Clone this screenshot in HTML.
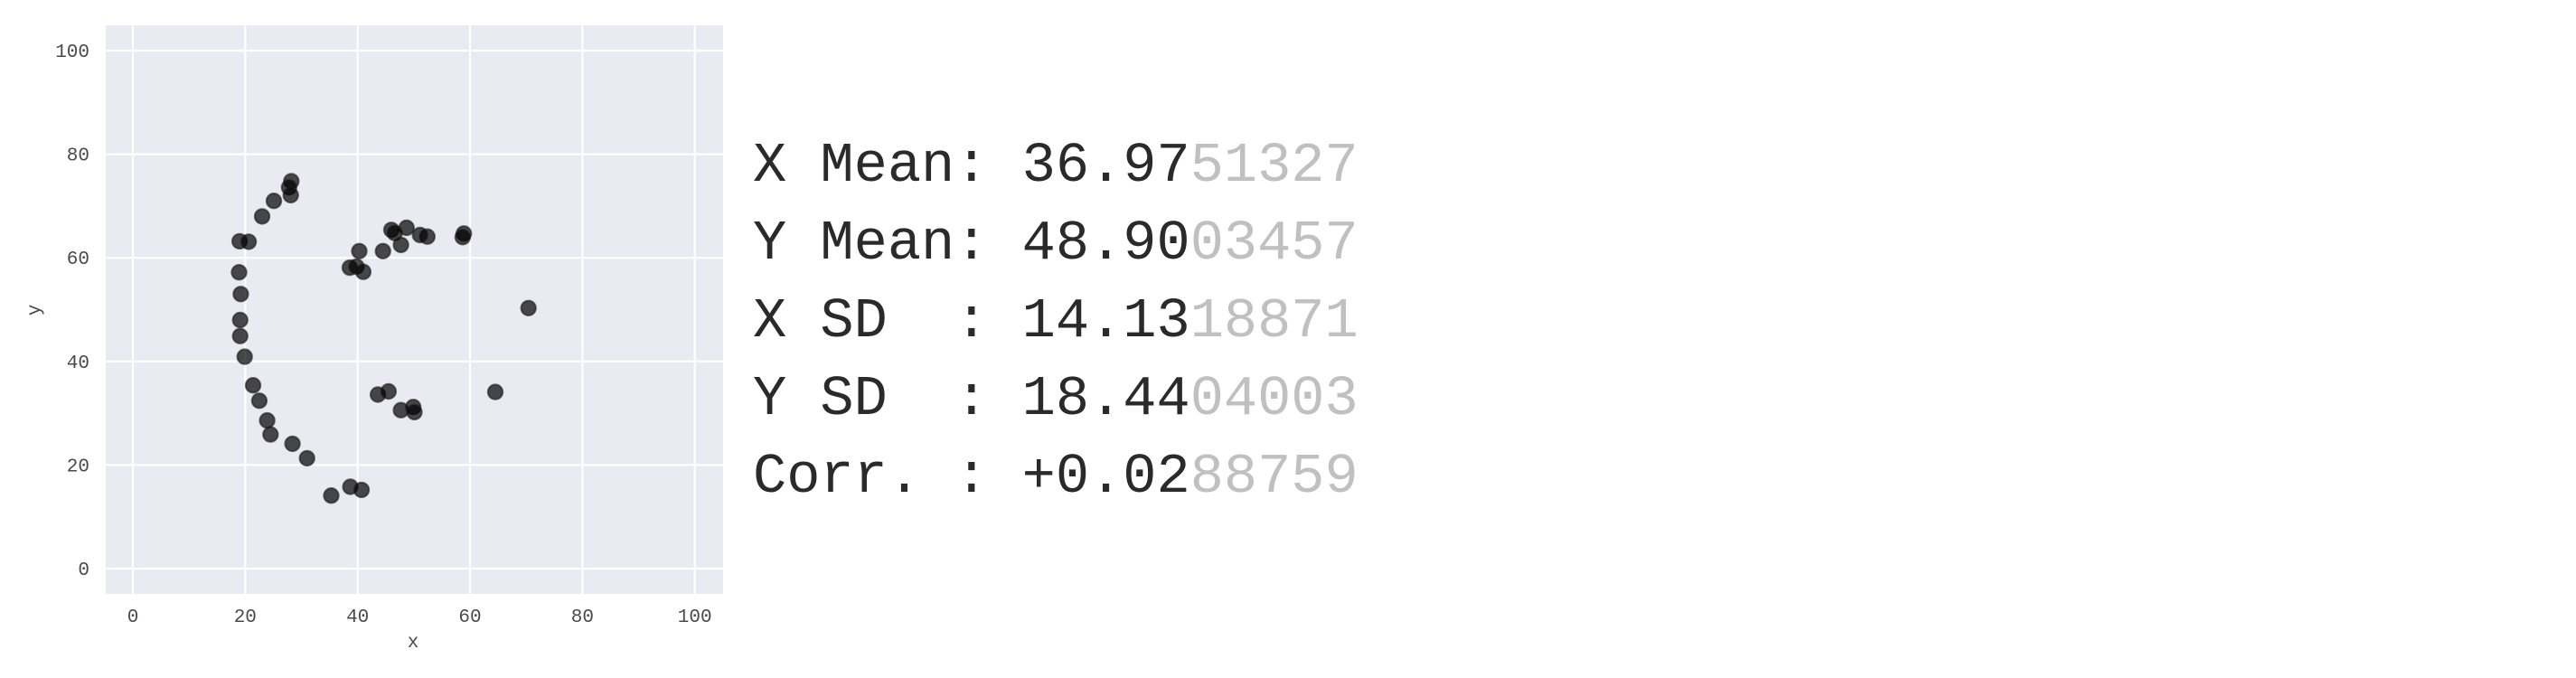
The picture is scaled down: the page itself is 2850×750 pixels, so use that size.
<!DOCTYPE html>
<html><head><meta charset="utf-8">
<style>
html,body{margin:0;padding:0;background:#fff;width:2850px;height:750px;overflow:hidden}
.stats{position:absolute;left:833px;top:0;font-family:"Liberation Mono",monospace;font-size:62px;color:#2a2a2a;white-space:pre;}
.stats div{position:absolute;left:0;line-height:62px;}
.g{color:#c0c0c0}
</style></head><body>
<svg width="2850" height="750" style="position:absolute;left:0;top:0" xmlns="http://www.w3.org/2000/svg">
<rect x="117" y="28" width="683" height="629" fill="#eaeaf2"/>
<g stroke="#fff" stroke-width="2.2">
<line x1="147" y1="28" x2="147" y2="657"/>
<line x1="271.3" y1="28" x2="271.3" y2="657"/>
<line x1="395.7" y1="28" x2="395.7" y2="657"/>
<line x1="520" y1="28" x2="520" y2="657"/>
<line x1="644.4" y1="28" x2="644.4" y2="657"/>
<line x1="768.7" y1="28" x2="768.7" y2="657"/>
<line x1="117" y1="629" x2="800" y2="629"/>
<line x1="117" y1="514.4" x2="800" y2="514.4"/>
<line x1="117" y1="399.8" x2="800" y2="399.8"/>
<line x1="117" y1="285.2" x2="800" y2="285.2"/>
<line x1="117" y1="170.6" x2="800" y2="170.6"/>
<line x1="117" y1="56" x2="800" y2="56"/>
</g>
<g font-family="Liberation Mono, monospace" font-size="21" fill="#4a4a4a" text-anchor="middle">
<text x="147" y="688">0</text><text x="271.3" y="688">20</text><text x="395.7" y="688">40</text>
<text x="520" y="688">60</text><text x="644.4" y="688">80</text><text x="768.7" y="688">100</text>
<text x="457" y="716">x</text>
</g>
<g font-family="Liberation Mono, monospace" font-size="21" fill="#4a4a4a" text-anchor="end">
<text x="99" y="636">0</text><text x="99" y="521.4">20</text><text x="99" y="406.8">40</text>
<text x="99" y="292.2">60</text><text x="99" y="177.6">80</text><text x="99" y="63">100</text>
</g>
<text x="0" y="0" font-family="Liberation Mono, monospace" font-size="21" fill="#4a4a4a" text-anchor="middle" transform="translate(44,343) rotate(-90)">y</text>
<g fill="rgba(0,0,0,0.7)" stroke="#1a1a1a" stroke-opacity="0.6" stroke-width="2">
<circle cx="322.3" cy="200.4" r="8.2"/>
<circle cx="319.8" cy="207.3" r="8.2"/>
<circle cx="321.7" cy="215.9" r="8.2"/>
<circle cx="303.0" cy="222.2" r="8.2"/>
<circle cx="290.0" cy="239.4" r="8.2"/>
<circle cx="265.1" cy="266.9" r="8.2"/>
<circle cx="275.1" cy="267.4" r="8.2"/>
<circle cx="264.5" cy="301.2" r="8.2"/>
<circle cx="266.4" cy="325.3" r="8.2"/>
<circle cx="265.7" cy="354.0" r="8.2"/>
<circle cx="265.7" cy="371.7" r="8.2"/>
<circle cx="270.7" cy="394.6" r="8.2"/>
<circle cx="280.0" cy="426.2" r="8.2"/>
<circle cx="286.9" cy="443.3" r="8.2"/>
<circle cx="295.6" cy="465.1" r="8.2"/>
<circle cx="299.3" cy="480.6" r="8.2"/>
<circle cx="323.6" cy="490.9" r="8.2"/>
<circle cx="339.7" cy="506.9" r="8.2"/>
<circle cx="366.5" cy="548.2" r="8.2"/>
<circle cx="387.6" cy="538.5" r="8.2"/>
<circle cx="400.0" cy="541.9" r="8.2"/>
<circle cx="418.1" cy="436.5" r="8.2"/>
<circle cx="429.9" cy="433.0" r="8.2"/>
<circle cx="443.6" cy="453.7" r="8.2"/>
<circle cx="457.2" cy="450.2" r="8.2"/>
<circle cx="458.5" cy="455.9" r="8.2"/>
<circle cx="548.0" cy="433.6" r="8.2"/>
<circle cx="584.7" cy="340.8" r="8.2"/>
<circle cx="513.2" cy="258.3" r="8.2"/>
<circle cx="511.9" cy="262.3" r="8.2"/>
<circle cx="472.8" cy="261.7" r="8.2"/>
<circle cx="464.7" cy="260.0" r="8.2"/>
<circle cx="449.8" cy="252.0" r="8.2"/>
<circle cx="433.0" cy="254.3" r="8.2"/>
<circle cx="436.7" cy="257.7" r="8.2"/>
<circle cx="443.6" cy="270.9" r="8.2"/>
<circle cx="423.7" cy="277.8" r="8.2"/>
<circle cx="397.5" cy="277.8" r="8.2"/>
<circle cx="387.0" cy="296.1" r="8.2"/>
<circle cx="394.4" cy="294.9" r="8.2"/>
<circle cx="401.9" cy="300.7" r="8.2"/>
</g>
</svg>
<div class="stats">
<div style="top:153px">X Mean: 36.97<span class="g">51327</span></div>
<div style="top:239px">Y Mean: 48.90<span class="g">03457</span></div>
<div style="top:325px">X SD  : 14.13<span class="g">18871</span></div>
<div style="top:411px">Y SD  : 18.44<span class="g">04003</span></div>
<div style="top:497px">Corr. : +0.02<span class="g">88759</span></div>
</div>
</body></html>
